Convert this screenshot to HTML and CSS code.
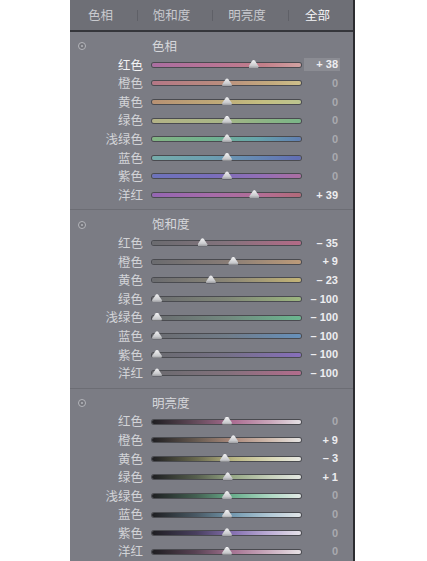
FILE: index.html
```html
<!DOCTYPE html>
<html lang="zh">
<head>
<meta charset="utf-8">
<link rel="stylesheet" href="styles.css">
</head>
<body>
<div class="panel">
  <div class="tabs">
    <div class="tab">色相</div>
    <div class="tab sep">饱和度</div>
    <div class="tab sep">明亮度</div>
    <div class="tab sep active">全部</div>
  </div>

  <section class="sec hue">
    <div class="row title"><span class="dot"></span><span class="ttl">色相</span></div>
    <div class="row"><span class="lab on">红色</span><span class="track t1"><i class="th" style="left:96.6px"></i></span><span class="val hot box">+ 38</span></div>
    <div class="row"><span class="lab">橙色</span><span class="track t2"><i class="th" style="left:70px"></i></span><span class="val">0</span></div>
    <div class="row"><span class="lab">黄色</span><span class="track t3"><i class="th" style="left:70px"></i></span><span class="val">0</span></div>
    <div class="row"><span class="lab">绿色</span><span class="track t4"><i class="th" style="left:70px"></i></span><span class="val">0</span></div>
    <div class="row"><span class="lab">浅绿色</span><span class="track t5"><i class="th" style="left:70px"></i></span><span class="val">0</span></div>
    <div class="row"><span class="lab">蓝色</span><span class="track t6"><i class="th" style="left:70px"></i></span><span class="val">0</span></div>
    <div class="row"><span class="lab">紫色</span><span class="track t7"><i class="th" style="left:70px"></i></span><span class="val">0</span></div>
    <div class="row"><span class="lab">洋红</span><span class="track t8"><i class="th" style="left:97.3px"></i></span><span class="val hot">+ 39</span></div>
  </section>

  <section class="sec sat">
    <div class="row title"><span class="dot"></span><span class="ttl">饱和度</span></div>
    <div class="row"><span class="lab">红色</span><span class="track t1"><i class="th" style="left:45.5px"></i></span><span class="val hot">– 35</span></div>
    <div class="row"><span class="lab">橙色</span><span class="track t2"><i class="th" style="left:76.3px"></i></span><span class="val hot">+ 9</span></div>
    <div class="row"><span class="lab">黄色</span><span class="track t3"><i class="th" style="left:53.9px"></i></span><span class="val hot">– 23</span></div>
    <div class="row"><span class="lab">绿色</span><span class="track t4"><i class="th" style="left:0px"></i></span><span class="val hot">– 100</span></div>
    <div class="row"><span class="lab">浅绿色</span><span class="track t5"><i class="th" style="left:0px"></i></span><span class="val hot">– 100</span></div>
    <div class="row"><span class="lab">蓝色</span><span class="track t6"><i class="th" style="left:0px"></i></span><span class="val hot">– 100</span></div>
    <div class="row"><span class="lab">紫色</span><span class="track t7"><i class="th" style="left:0px"></i></span><span class="val hot">– 100</span></div>
    <div class="row"><span class="lab">洋红</span><span class="track t8"><i class="th" style="left:0px"></i></span><span class="val hot">– 100</span></div>
  </section>

  <section class="sec lum">
    <div class="row title"><span class="dot"></span><span class="ttl">明亮度</span></div>
    <div class="row"><span class="lab">红色</span><span class="track t1"><i class="th" style="left:70px"></i></span><span class="val">0</span></div>
    <div class="row"><span class="lab">橙色</span><span class="track t2"><i class="th" style="left:76.3px"></i></span><span class="val hot">+ 9</span></div>
    <div class="row"><span class="lab">黄色</span><span class="track t3"><i class="th" style="left:67.9px"></i></span><span class="val hot">– 3</span></div>
    <div class="row"><span class="lab">绿色</span><span class="track t4"><i class="th" style="left:70.7px"></i></span><span class="val hot">+ 1</span></div>
    <div class="row"><span class="lab">浅绿色</span><span class="track t5"><i class="th" style="left:70px"></i></span><span class="val">0</span></div>
    <div class="row"><span class="lab">蓝色</span><span class="track t6"><i class="th" style="left:70px"></i></span><span class="val">0</span></div>
    <div class="row"><span class="lab">紫色</span><span class="track t7"><i class="th" style="left:70px"></i></span><span class="val">0</span></div>
    <div class="row"><span class="lab">洋红</span><span class="track t8"><i class="th" style="left:70px"></i></span><span class="val">0</span></div>
  </section>
</div>
</body>
</html>
```
FILE: styles.css
```css
html, body {
  margin: 0;
  padding: 0;
  background: #ffffff;
}
body {
  font-family: "Noto Sans CJK SC", "Noto Sans", sans-serif;
  width: 427px;
  height: 561px;
  overflow: hidden;
}
.panel {
  margin-left: 70px;
  width: 283px;
  height: 561px;
  background: #7b7c84;
  border-right: 2px solid #2c2c30;
  overflow: hidden;
}
.tabs {
  display: grid;
  grid-template-columns: 67px 75px 76px 65px;
  height: 30px;
  background: #6e6f76;
  border-bottom: 2px solid #35363b;
}
.tab {
  position: relative;
  display: flex;
  align-items: center;
  justify-content: center;
  padding-right: 6px;
  font-size: 12.5px;
  color: #c9cacf;
  line-height: 1;
}
.tab.sep::before {
  content: "";
  position: absolute;
  left: 0;
  top: 10px;
  height: 11px;
  border-left: 1px solid #5f6067;
}
.tab.active {
  color: #f4f4f6;
}
.sec {
  padding: 5px 0 5px;
  border-bottom: 1px solid #6c6d74;
}
.row {
  display: grid;
  grid-template-columns: 73px 158px 39px;
  align-items: center;
  height: 18.6px;
}
.row .track { margin-left: 9px; }
.row .val { margin-left: 3px; }
.row.title {
  grid-template-columns: 82px 1fr;
}
.dot {
  width: 8px;
  height: 8px;
  margin-left: 8px;
  border-radius: 50%;
  box-sizing: border-box;
  border: 1.5px solid #b4b5ba;
  background: radial-gradient(circle, #a4a5ab 0 1.2px, #72737a 1.6px);
}
.ttl {
  font-size: 12.5px;
  color: #d6d7db;
  line-height: 1;
}
.lab {
  text-align: right;
  font-size: 12.5px;
  color: #d2d3d7;
  line-height: 1;
}
.lab.on { color: #f2f2f4; }
.val {
  font-family: "Liberation Sans", "DejaVu Sans", sans-serif;
  font-size: 11px;
  font-weight: bold;
  padding-right: 2px;
  color: #a9aaaf;
  height: 13px;
  line-height: 13px;
  white-space: nowrap;
  display: flex;
  justify-content: flex-end;
}
.val.hot { color: #ededf0; }
.val.box { background: #8b8c93; }
.track {
  position: relative;
  height: 4px;
  border-radius: 2px;
  box-shadow: 0 0 0 1px #4a4b51;
  width: 149px;
  filter: saturate(0.8);
}
.th {
  position: absolute;
  top: -3px;
  width: 10px;
  height: 8px;
  background: linear-gradient(#f4f4f6, #c9cace 70%, #9d9ea3);
  clip-path: polygon(50% 0, 62% 8%, 100% 78%, 95% 100%, 5% 100%, 0 78%, 38% 8%);
  filter: drop-shadow(0 1px 0 #50515a);
}

/* hue */
.hue .t1 { background: linear-gradient(90deg, #b56aa9, #c4709a 40%, #cf7b88 75%, #dba0a0); }
.hue .t2 { background: linear-gradient(90deg, #c07486, #c28a78 45%, #c9aa72 80%, #d2c07e); }
.hue .t3 { background: linear-gradient(90deg, #c0906a, #c4aa6c 45%, #c6c073 75%, #bcc684); }
.hue .t4 { background: linear-gradient(90deg, #b5b47c, #a7b77c 45%, #86b77c 75%, #6fba80); }
.hue .t5 { background: linear-gradient(90deg, #7ab87a, #64b68c 40%, #5aa8b0 70%, #5a7fc0); }
.hue .t6 { background: linear-gradient(90deg, #6ab0ae, #62a0b8 40%, #5e84c0 75%, #5e6cc4); }
.hue .t7 { background: linear-gradient(90deg, #6a72cc, #7a6ccc 40%, #9a6cc4 75%, #b86aaa); }
.hue .t8 { background: linear-gradient(90deg, #9c62c2, #b068b4 40%, #c06a98 75%, #c06678); }

/* saturation */
.sat .t1 { background: linear-gradient(90deg, #6a6b70, #87727e 50%, #c2668a); }
.sat .t2 { background: linear-gradient(90deg, #6a6b70, #8a7c74 50%, #c49a70); }
.sat .t3 { background: linear-gradient(90deg, #6a6b70, #8c8672 50%, #c8b468); }
.sat .t4 { background: linear-gradient(90deg, #6a6b70, #7f8874 50%, #98b874); }
.sat .t5 { background: linear-gradient(90deg, #6a6b70, #6e8a7e 50%, #5cbc8a); }
.sat .t6 { background: linear-gradient(90deg, #6a6b70, #6e7c8c 50%, #5e92c8); }
.sat .t7 { background: linear-gradient(90deg, #6a6b70, #76708c 50%, #8a6ccc); }
.sat .t8 { background: linear-gradient(90deg, #6a6b70, #86707e 50%, #c06890); }

/* luminance */
.lum .t1 { background: linear-gradient(90deg, #1e1e22, #6a4a5e 30%, #b86a98 55%, #d2a6be 80%, #e6e2e6); }
.lum .t2 { background: linear-gradient(90deg, #1e1e22, #6a5a4e 30%, #b48a78 55%, #d6bcac 80%, #e6e4e2); }
.lum .t3 { background: linear-gradient(90deg, #1e1e22, #6a6a48 30%, #bcb878 55%, #dcdab0 80%, #e8e8e2); }
.lum .t4 { background: linear-gradient(90deg, #1e1e22, #55604a 30%, #96aa80 55%, #c6d2b8 80%, #e4e8e2); }
.lum .t5 { background: linear-gradient(90deg, #1e1e22, #3e6250 30%, #5eb48a 55%, #a8dcc2 80%, #e2eae6); }
.lum .t6 { background: linear-gradient(90deg, #1e1e22, #465a68 30%, #6e9cb8 55%, #b0ccdc 80%, #e2e6ea); }
.lum .t7 { background: linear-gradient(90deg, #1e1e22, #4a3e66 30%, #8a70c0 55%, #c2b0e0 80%, #e6e2ea); }
.lum .t8 { background: linear-gradient(90deg, #1e1e22, #5e4258 30%, #b07298 55%, #d2aec4 80%, #e8e2e6); }
```
